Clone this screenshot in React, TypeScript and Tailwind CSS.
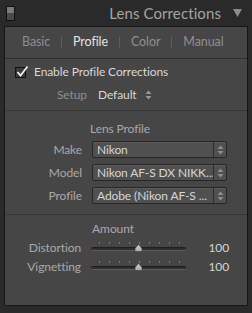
import React from 'react'

const font = { fontFamily: 'Lato, "Open Sans", sans-serif' }

const UpDown = ({ color = '#9a9a9a' }: { color?: string }) => (
  <svg width="7" height="10" viewBox="0 0 7 10">
    <path d="M3.5 0.5 L6.5 4 L0.5 4 Z" fill={color} />
    <path d="M3.5 9.5 L6.5 6 L0.5 6 Z" fill={color} />
  </svg>
)

const Select = ({ value }: { value: string }) => (
  <div className="flex h-[17px] w-[135px] border border-[#262626] bg-[#505050] rounded-[2px] shadow-[inset_0_1px_0_#5c5c5c]">
    <div className="flex-1 flex items-center pl-[4px] text-[12px] tracking-[-0.1px] text-[#d6d6d6] whitespace-nowrap overflow-hidden">
      {value}
    </div>
    <div className="w-[13px] flex items-center justify-center border-l border-[#2c2c2c]">
      <UpDown color="#8e8e8e" />
    </div>
  </div>
)

const Slider = ({ label, value }: { label: string; value: number }) => {
  const ticks = [100, 110, 120, 130, 140, 150, 160, 170, 180]
  return (
    <div className="flex items-center h-[19px]">
      <div className="w-[76px] text-right text-[12px] tracking-[-0.1px] text-[#a9a9a9]">{label}</div>
      <div className="ml-[10px] relative w-[95px] h-[19px]">
        {ticks.map((t) => (
          <div
            key={t}
            className="absolute top-[4px] w-px h-[2px] bg-[#7a7a7a]"
            style={{ left: t - 92 }}
          />
        ))}
        <div className="absolute left-0 right-0 top-[9px] h-[4px] rounded-full bg-[#2e2e2e] border-b border-[#5e5e5e] shadow-[inset_0_1px_0_#1e1e1e]" />
        <svg className="absolute top-[6px] left-[43px]" width="9" height="8" viewBox="0 0 9 8">
          <defs>
            <linearGradient id="th" x1="0" y1="0" x2="0" y2="1">
              <stop offset="0" stopColor="#d8d8d8" />
              <stop offset="1" stopColor="#a6a6a6" />
            </linearGradient>
          </defs>
          <path d="M4.5 0.5 L8 4.5 L8 7.5 L1 7.5 L1 4.5 Z" fill="url(#th)" stroke="#3a3a3a" strokeWidth="0.6" />
        </svg>
      </div>
      <div className="w-[43px] text-right text-[12px] text-[#d6d6d6]">{value}</div>
    </div>
  )
}

export default function App() {
  return (
    <div className="w-[252px] h-[313px] bg-[#2a2a2a] flex flex-col overflow-hidden" style={font}>
      {/* header */}
      <div className="h-[26px] flex items-center pl-[6px] pr-[10px]">
        <div className="w-[9px] h-[15px] border border-[#111] flex flex-col">
          <div className="flex-1 bg-[#7a7a7a]" />
          <div className="flex-1 bg-[#4a4a4a]" />
        </div>
        <div className="flex-1" />
        <span className="text-[15px] text-[#a4a4a4] tracking-[0.1px]">Lens Corrections</span>
        <svg className="ml-[12px]" width="9" height="8" viewBox="0 0 9 8">
          <path d="M0 0 L9 0 L4.5 8 Z" fill="#8c8c8c" />
        </svg>
      </div>

      {/* panel */}
      <div className="mx-[4px] h-[280px] border border-[#161616] bg-[#464646] flex flex-col text-[12px] tracking-[-0.1px]">
        {/* tabs */}
        <div className="h-[32px] border-b border-[#2f2f2f] flex items-center pl-[17px] text-[12.5px]">
          <span className="text-[#8f8f8f]">Basic</span>
          <span className="mx-[11px] w-px h-[11px] bg-[#5e5e5e]" />
          <span className="text-[#e4e4e4]">Profile</span>
          <span className="mx-[11px] w-px h-[11px] bg-[#5e5e5e]" />
          <span className="text-[#8f8f8f]">Color</span>
          <span className="mx-[11px] w-px h-[11px] bg-[#5e5e5e]" />
          <span className="text-[#8f8f8f]">Manual</span>
        </div>

        {/* enable */}
        <div className="pt-[2px] pb-[4px] border-b border-[#363636]">
          <div className="h-[22px] flex items-center pl-[10px]">
            <div className="relative w-[11px] h-[11px] border border-[#111] bg-[#3a3a3a]">
              <svg className="absolute -top-[3px] left-0" width="13" height="13" viewBox="0 0 13 13">
                <path d="M1.5 7 L4.5 10.5 L11.5 1.5" fill="none" stroke="#f0f0f0" strokeWidth="1.8" />
              </svg>
            </div>
            <span className="ml-[8px] text-[#d8d8d8]">Enable Profile Corrections</span>
          </div>
          <div className="h-[23px] flex items-center pl-[52px]">
            <span className="text-[#8f8f8f]">Setup</span>
            <span className="ml-[11px] text-[#d8d8d8]">Default</span>
            <span className="ml-[8px] flex"><UpDown /></span>
          </div>
        </div>

        {/* lens profile */}
        <div className="pt-[9px] pb-[7px] border-b border-[#363636]">
          <div className="h-[18px] flex items-center justify-center pr-[12px] text-[#a9a9a9]">
            Lens Profile
          </div>
          {[
            ['Make', 'Nikon'],
            ['Model', 'Nikon AF-S DX NIKK...'],
            ['Profile', 'Adobe (Nikon AF-S ...'],
          ].map(([l, v]) => (
            <div key={l} className="h-[23px] flex items-center">
              <div className="w-[77px] text-right text-[#a9a9a9]">{l}</div>
              <div className="ml-[10px]">
                <Select value={v} />
              </div>
            </div>
          ))}
        </div>

        {/* amount */}
        <div className="pt-[5px]">
          <div className="h-[18px] flex items-center justify-center pr-[26px] text-[#a9a9a9]">
            Amount
          </div>
          <Slider label="Distortion" value={100} />
          <Slider label="Vignetting" value={100} />
        </div>
      </div>
    </div>
  )
}
